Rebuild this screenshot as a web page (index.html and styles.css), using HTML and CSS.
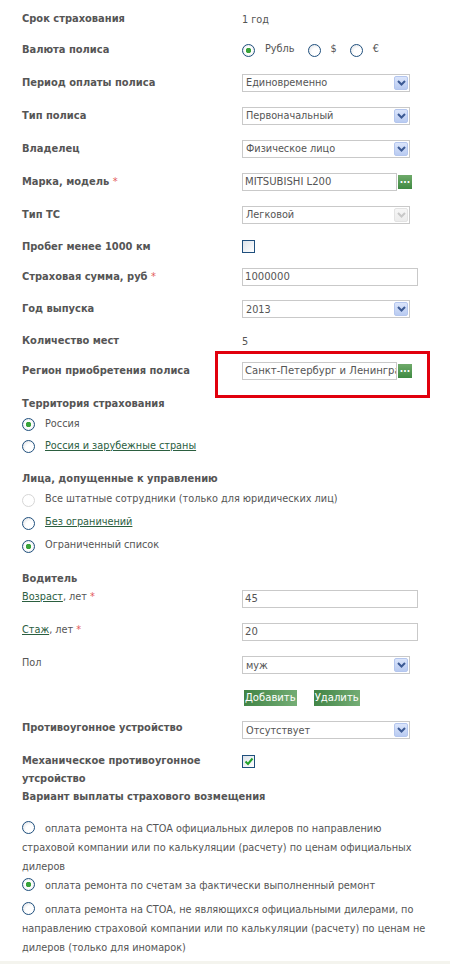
FILE: index.html
```html
<!DOCTYPE html>
<html lang="ru">
<head>
    <meta charset="UTF-8">
    <meta name="viewport" content="width=device-width, initial-scale=1.0">
    <title>Расчет КАСКО</title>
    <link rel="stylesheet" href="styles.css">
</head>
<body>

<div class="form">
    <div class="row r30">
        <div class="label">Срок страхования</div>
        <div class="field">1 год</div>
    </div>
    <div class="row r32">
        <div class="label">Валюта полиса</div>
        <div class="field currency">
            <input type="radio" name="valuta" checked><span class="cur">Рубль</span>
            <input type="radio" name="valuta"><span class="cur">$</span>
            <input type="radio" name="valuta"><span class="cur">€</span>
        </div>
    </div>
    <div class="row">
        <div class="label">Период оплаты полиса</div>
        <div class="field"><div class="select"><span>Единовременно</span><span class="arrow"><svg width="9" height="6" viewBox="0 0 9 6"><path d="M1 1 L4.5 4.5 L8 1" fill="none" stroke="#3c5a94" stroke-width="2"/></svg></span></div></div>
    </div>
    <div class="row">
        <div class="label">Тип полиса</div>
        <div class="field"><div class="select"><span>Первоначальный</span><span class="arrow"><svg width="9" height="6" viewBox="0 0 9 6"><path d="M1 1 L4.5 4.5 L8 1" fill="none" stroke="#3c5a94" stroke-width="2"/></svg></span></div></div>
    </div>
    <div class="row">
        <div class="label">Владелец</div>
        <div class="field"><div class="select"><span>Физическое лицо</span><span class="arrow"><svg width="9" height="6" viewBox="0 0 9 6"><path d="M1 1 L4.5 4.5 L8 1" fill="none" stroke="#3c5a94" stroke-width="2"/></svg></span></div></div>
    </div>
    <div class="row">
        <div class="label">Марка, модель <span class="req">*</span></div>
        <div class="field"><div class="input short">MITSUBISHI L200</div><span class="dots">...</span></div>
    </div>
    <div class="row">
        <div class="label">Тип ТС</div>
        <div class="field"><div class="select disabled"><span>Легковой</span><span class="arrow"><svg width="9" height="6" viewBox="0 0 9 6"><path d="M1 1 L4.5 4.5 L8 1" fill="none" stroke="#c8c8c8" stroke-width="2"/></svg></span></div></div>
    </div>
    <div class="row r31">
        <div class="label">Пробег менее 1000 км</div>
        <div class="field"><span class="check"></span></div>
    </div>
    <div class="row r30">
        <div class="label">Страховая сумма, руб <span class="req">*</span></div>
        <div class="field"><div class="input">1000000</div></div>
    </div>
    <div class="row r34">
        <div class="label">Год выпуска</div>
        <div class="field"><div class="select"><span>2013</span><span class="arrow"><svg width="9" height="6" viewBox="0 0 9 6"><path d="M1 1 L4.5 4.5 L8 1" fill="none" stroke="#3c5a94" stroke-width="2"/></svg></span></div></div>
    </div>
    <div class="row r30">
        <div class="label">Количество мест</div>
        <div class="field">5</div>
    </div>
    <div class="row r30">
        <div class="label">Регион приобретения полиса</div>
        <div class="field marked"><div class="input short">Санкт-Петербург и Ленинградская область</div><span class="dots">...</span></div>
    </div>

    <div class="title t-first">Территория страхования</div>
    <div class="opt"><input type="radio" name="terr" checked>Россия</div>
    <div class="opt"><input type="radio" name="terr"><a href="#">Россия и зарубежные страны</a></div>

    <div class="title">Лица, допущенные к управлению</div>
    <div class="opt o23"><input type="radio" name="lica" disabled>Все штатные сотрудники (только для юридических лиц)</div>
    <div class="opt o23"><input type="radio" name="lica"><a href="#">Без ограничений</a></div>
    <div class="opt o23"><input type="radio" name="lica" checked>Ограниченный список</div>

    <div class="title">Водитель</div>
    <div class="row top">
        <div class="label plain"><a href="#">Возраст</a>, лет <span class="req">*</span></div>
        <div class="field"><div class="input">45</div></div>
    </div>
    <div class="row top">
        <div class="label plain"><a href="#">Стаж</a>, лет <span class="req">*</span></div>
        <div class="field"><div class="input">20</div></div>
    </div>
    <div class="row top">
        <div class="label plain">Пол</div>
        <div class="field"><div class="select"><span>муж</span><span class="arrow"><svg width="9" height="6" viewBox="0 0 9 6"><path d="M1 1 L4.5 4.5 L8 1" fill="none" stroke="#3c5a94" stroke-width="2"/></svg></span></div></div>
    </div>
    <div class="row top r30">
        <div class="label"></div>
        <div class="field buttons"><button>Добавить</button><button>Удалить</button></div>
    </div>
    <div class="row top pad4">
        <div class="label">Противоугонное устройство</div>
        <div class="field"><div class="select"><span>Отсутствует</span><span class="arrow"><svg width="9" height="6" viewBox="0 0 9 6"><path d="M1 1 L4.5 4.5 L8 1" fill="none" stroke="#3c5a94" stroke-width="2"/></svg></span></div></div>
    </div>
    <div class="row top auto">
        <div class="label tall">Механическое противоугонное утсройство</div>
        <div class="field"><span class="check checked"><svg width="10" height="9" viewBox="0 0 10 9"><path d="M1.5 4.5 L4 7 L8.5 1.5" fill="none" stroke="#21a12a" stroke-width="2"/></svg></span></div>
    </div>
    <div class="title tall">Вариант выплаты страхового возмещения</div>

    <div class="pay first"><input type="radio" name="pay">оплата ремонта на СТОА официальных дилеров по направлению страховой компании или по калькуляции (расчету) по ценам официальных дилеров</div>
    <div class="pay"><input type="radio" name="pay" checked>оплата ремонта по счетам за фактически выполненный ремонт</div>
    <div class="pay last"><input type="radio" name="pay">оплата ремонта на СТОА, не являющихся официальными дилерами, по направлению страховой компании или по калькуляции (расчету) по ценам не дилеров (только для иномарок)</div>
</div>
<div class="footer-line"></div>

</body>
</html>
```

FILE: styles.css
```css
body {
    margin: 0;
    padding: 0;
    background-color: #fff;
    color: #555;
    font-family: "DejaVu Sans Condensed", "DejaVu Sans", sans-serif;
    font-size: 10.8px;
}
a {
    color: #2b5e3f;
    text-decoration: underline;
}
.form {
    width: 410px;
    padding: 4px 0 0 22px;
}
.row {
    display: flex;
    align-items: center;
    height: 33px;
}
.r30 { height: 30px; }
.r31 { height: 31px; }
.r32 { height: 32px; }
.r34 { height: 34px; }
.row.top {
    align-items: flex-start;
    padding-top: 2px;
    height: 31px;
}
.row.top.r30 { height: 28px; }
.row.top.pad4 { padding-top: 4px; height: 29px; }
.row.top.auto { height: auto; padding-top: 3px; }
.label {
    width: 220px;
    flex: none;
    font-weight: bold;
    font-size: 11px;
    line-height: 16px;
}
.label.plain {
    font-weight: normal;
    font-size: 10.8px;
}
.label.tall {
    line-height: 18px;
    width: 200px;
    margin-right: 20px;
}
.req {
    color: #e35b5b;
    font-weight: normal;
}
.field {
    display: flex;
    align-items: center;
    flex: 1;
}
.row.top .field {
    margin-top: 1px;
}
.currency .cur {
    margin: -4px 13px 0 10px;
}
.select {
    height: 16px;
    border: 1px solid #c9c9c9;
    background: #fff;
    display: flex;
    align-items: center;
    justify-content: space-between;
    color: #555;
    padding-left: 3px;
    box-sizing: content-box;
    width: 163px;
}
.select .arrow {
    width: 14px;
    height: 14px;
    margin-right: 1px;
    border: 1px solid #b4c6ee;
    border-radius: 2px;
    box-sizing: border-box;
    background: linear-gradient(#dbe5fb, #b9cbf1);
    display: flex;
    align-items: center;
    justify-content: center;
}
.select.disabled .arrow {
    border-color: #e3e3e3;
    background: linear-gradient(#f6f6f6, #ececec);
}
.input {
    width: 172px;
    height: 16px;
    line-height: 16px;
    border: 1px solid #c9c9c9;
    padding-left: 2px;
    color: #555;
    white-space: nowrap;
    overflow: hidden;
    font-size: 11.2px;
}
.input.short {
    width: 151px;
}
.dots {
    width: 14px;
    height: 14px;
    margin-left: 1px;
    background: linear-gradient(#6faa6a, #3f8a42);
    color: #fff;
    font-size: 10px;
    line-height: 9px;
    text-align: center;
    font-weight: bold;
}
.marked {
    position: relative;
}
.marked::after {
    content: "";
    position: absolute;
    left: -27px;
    top: -11px;
    width: 209px;
    height: 41px;
    border: 3px solid #e1000d;
}
.check {
    width: 11px;
    height: 11px;
    border: 1px solid #1f4f7d;
    background: linear-gradient(135deg, #dde3ea, #fff);
    display: flex;
    align-items: center;
    justify-content: center;
}
.check.checked {
    margin-top: 2px;
}
input[type="radio"] {
    appearance: none;
    -webkit-appearance: none;
    width: 13px;
    height: 13px;
    margin: 0;
    border: 1px solid #1f4f7d;
    border-radius: 50%;
    background: radial-gradient(circle at 65% 65%, #fff 40%, #d9dce0 100%);
    flex: none;
    box-sizing: border-box;
    vertical-align: middle;
    position: relative;
}
input[type="radio"]:checked {
    background: radial-gradient(circle, #3aa33a 0 2.5px, #fff 3px, #fff 45%, #d9dce0 100%);
}
input[type="radio"]:disabled {
    border-color: #d6d6d6;
    background: #fff;
}
.title {
    font-weight: bold;
    font-size: 11px;
    line-height: 16px;
    margin-top: 15px;
}
.title.t-first {
    margin-top: 10px;
}
.title.tall {
    margin-top: 0;
    line-height: 18px;
}
.opt {
    height: 22px;
    display: flex;
    align-items: center;
}
.opt.o23 {
    height: 23px;
}
.opt input {
    margin: 3px 10px 0 0;
}
.buttons button {
    border: none;
    padding: 0 1px;
    height: 16px;
    margin: 1px 15px 0 2px;
    color: #fff;
    font-family: "DejaVu Sans Condensed", "DejaVu Sans", sans-serif;
    font-size: 11.2px;
    line-height: 16px;
    background: linear-gradient(100deg, #3f8344, #75ae76);
    cursor: pointer;
}
.pay {
    line-height: 19px;
    width: 408px;
}
.pay input {
    margin: -3px 10px 0 0;
}
.pay.first {
    margin-top: 13px;
}
.pay.last {
    margin-top: 5px;
}
.footer-line {
    height: 4px;
    margin-top: 4px;
    background-color: #f4f4ee;
}
```
